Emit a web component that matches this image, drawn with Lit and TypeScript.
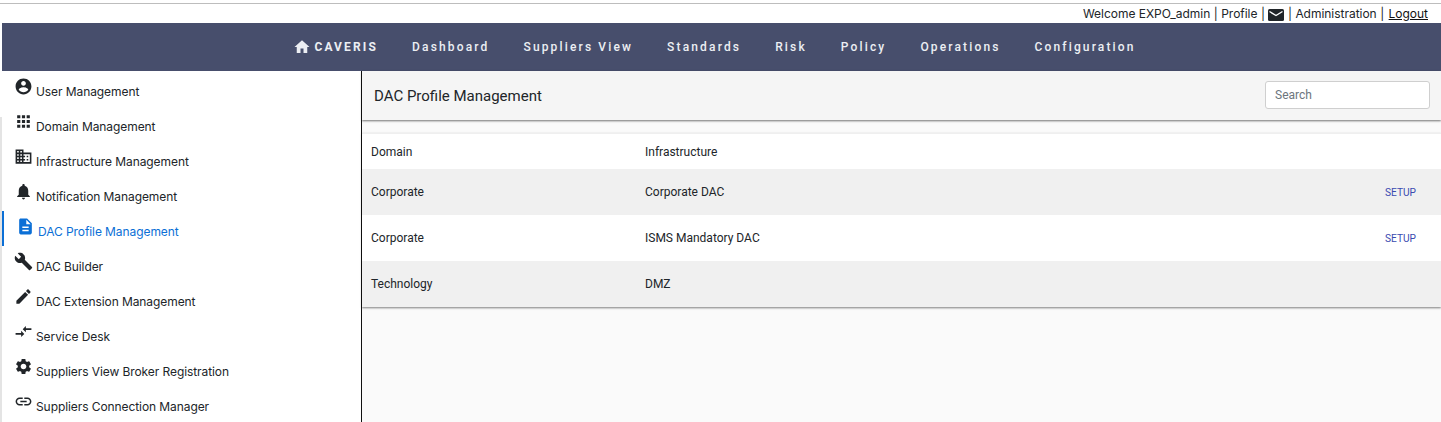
import { LitElement, html, css, svg } from "lit";
import { customElement } from "lit/decorators.js";

const ICONS: Record<string, string> = {
  user: "M12 2C6.48 2 2 6.48 2 12s4.48 10 10 10 10-4.48 10-10S17.52 2 12 2zm0 3c1.66 0 3 1.34 3 3s-1.34 3-3 3-3-1.34-3-3 1.34-3 3-3zm0 14.2c-2.5 0-4.71-1.28-6-3.22.03-1.99 4-3.08 6-3.08 1.99 0 5.97 1.09 6 3.08-1.29 1.94-3.5 3.22-6 3.22z",
  apps: "M4 8h4V4H4v4zm6 12h4v-4h-4v4zm-6 0h4v-4H4v4zm0-6h4v-4H4v4zm6 0h4v-4h-4v4zm6-10v4h4V4h-4zm-6 4h4V4h-4v4zm6 6h4v-4h-4v4zm0 6h4v-4h-4v4z",
  domain: "M12 7V3H2v18h20V7H12zM6 19H4v-2h2v2zm0-4H4v-2h2v2zm0-4H4V9h2v2zm0-4H4V5h2v2zm4 12H8v-2h2v2zm0-4H8v-2h2v2zm0-4H8V9h2v2zm0-4H8V5h2v2zm10 12h-8v-2h2v-2h-2v-2h2v-2h-2V9h8v10zm-2-8h-2v2h2v-2zm0 4h-2v2h2v-2z",
  bell: "M12 22c1.1 0 2-.9 2-2h-4c0 1.1.89 2 2 2zm6-6v-5c0-3.07-1.64-5.64-4.5-6.32V4c0-.83-.67-1.5-1.5-1.5s-1.5.67-1.5 1.5v.68C7.63 5.36 6 7.92 6 11v5l-2 2v1h16v-1l-2-2z",
  doc: "M14 2H6c-1.1 0-1.99.9-1.99 2L4 20c0 1.1.89 2 1.99 2H18c1.1 0 2-.9 2-2V8l-6-6zm2 16H8v-2h8v2zm0-4H8v-2h8v2zm-3-5V3.5L18.5 9H13z",
  wrench: "M22.7 19l-9.1-9.1c.9-2.3.4-5-1.5-6.9-2-2-5-2.4-7.4-1.3L9 6 6 9 1.6 4.7C.4 7.1.9 10.1 2.9 12.1c1.9 1.9 4.6 2.4 6.9 1.5l9.1 9.1c.4.4 1 .4 1.4 0l2.3-2.3c.5-.4.5-1.1.1-1.4z",
  pencil: "M3 17.25V21h3.75L17.81 9.94l-3.75-3.75L3 17.25zM20.71 7.04c.39-.39.39-1.02 0-1.41l-2.34-2.34c-.39-.39-1.02-.39-1.41 0l-1.83 1.83 3.75 3.75 1.83-1.83z",
  compare: "M9.01 14H2v2h7.01v3L13 15l-3.99-4v3zm5.98-1v-3H22V8h-7.01V5L11 9l3.99 4z",
  gear: "M19.14 12.94c.04-.3.06-.61.06-.94 0-.32-.02-.64-.07-.94l2.03-1.58c.18-.14.23-.41.12-.61l-1.92-3.32c-.12-.22-.37-.29-.59-.22l-2.39.96c-.5-.38-1.03-.7-1.62-.94l-.36-2.54c-.04-.24-.24-.41-.48-.41h-3.84c-.24 0-.43.17-.47.41l-.36 2.54c-.59.24-1.13.57-1.62.94l-2.39-.96c-.22-.08-.47 0-.59.22L2.74 8.87c-.12.21-.08.47.12.61l2.03 1.58c-.05.3-.09.63-.09.94s.02.64.07.94l-2.03 1.58c-.18.14-.23.41-.12.61l1.92 3.32c.12.22.37.29.59.22l2.39-.96c.5.38 1.03.7 1.62.94l.36 2.54c.05.24.24.41.48.41h3.84c.24 0 .44-.17.47-.41l.36-2.54c.59-.24 1.13-.56 1.62-.94l2.39.96c.22.08.47 0 .59-.22l1.92-3.32c.12-.22.07-.47-.12-.61l-2.01-1.58zM12 15.6c-1.98 0-3.6-1.62-3.6-3.6s1.62-3.6 3.6-3.6 3.6 1.62 3.6 3.6-1.62 3.6-3.6 3.6z",
  link: "M3.9 12c0-1.71 1.39-3.1 3.1-3.1h4V7H7c-2.76 0-5 2.24-5 5s2.24 5 5 5h4v-1.9H7c-1.71 0-3.1-1.39-3.1-3.1zM8 13h8v-2H8v2zm9-6h-4v1.9h4c1.71 0 3.1 1.39 3.1 3.1s-1.39 3.1-3.1 3.1h-4V17h4c2.76 0 5-2.24 5-5s-2.24-5-5-5z",
  home: "M10 20v-6h4v6h5v-8h3L12 3 2 12h3v8z",
};

const icon = (name: string, size: number) => html`<svg class="ic" width=${size} height=${size} viewBox="0 0 24 24" fill="currentColor">${svg`<path d=${ICONS[name]}></path>`}</svg>`;

const MENU: [string, string][] = [
  ["user", "User Management"],
  ["apps", "Domain Management"],
  ["domain", "Infrastructure Management"],
  ["bell", "Notification Management"],
  ["doc", "DAC Profile Management"],
  ["wrench", "DAC Builder"],
  ["pencil", "DAC Extension Management"],
  ["compare", "Service Desk"],
  ["gear", "Suppliers View Broker Registration"],
  ["link", "Suppliers Connection Manager"],
];

const NAV = ["Dashboard", "Suppliers View", "Standards", "Risk", "Policy", "Operations", "Configuration"];

const ROWS: [string, string, boolean][] = [
  ["Corporate", "Corporate DAC", true],
  ["Corporate", "ISMS Mandatory DAC", true],
  ["Technology", "DMZ", false],
];

@customElement("app-root")
export class AppRoot extends LitElement {
  static styles = css`
    :host { display: block; height: 422px; overflow: hidden; background: #fff; font-family: Inter, "Liberation Sans", sans-serif; color: #212529; }
    .top { border-top: 1px solid #bdbdbd; margin-top: 3px; height: 19px; display: flex; justify-content: flex-end; align-items: center; gap: 3.5px; padding-right: 13px; font-size: 12px; letter-spacing: -0.03px; color: #212529; white-space: nowrap; }
    .top u { color: #111; margin-left: 1px; }
    .mail { width: 16px; height: 12px; margin: 3px 0 0 0; display: block; }
    .nav { margin-left: 2px; height: 48px; background: #474e6c; display: flex; justify-content: center; align-items: center; gap: 34px; color: #eceef3; font-family: Roboto, sans-serif; font-weight: 500; font-size: 12px; letter-spacing: 2.15px; padding-right: 14px; }
    .brand { display: flex; align-items: center; gap: 3px; font-weight: 700; }
    .body { display: flex; height: 351px; }
    .rail { width: 2px; flex: none; display: flex; flex-direction: column; }
    .rail i { display: block; height: 46px; background: #fff; }
    .rail b { display: block; flex: 1; background: #e4e4e4; }
    .side { width: 360px; flex: none; box-sizing: border-box; border-right: 1px solid #111; display: flex; flex-direction: column; }
    .item { height: 35px; flex: none; display: flex; align-items: flex-start; gap: 3px; padding-left: 12px; font-size: 12px; letter-spacing: -0.08px; color: #212529; box-sizing: border-box; }
    .item .ic { margin-top: 6px; flex: none; color: #212529; }
    .item span { margin-top: 13px; line-height: 15px; white-space: nowrap; }
    .item.active { color: #0b6fd6; border-left: 2px solid #0b6fd6; padding-left: 12px; }
    .item.active .ic { color: #0b6fd6; }
    .main { flex: 1; min-width: 0; background: #fafafa; font-family: Roboto, sans-serif; }
    .head { height: 49px; background: #f5f5f5; display: flex; justify-content: space-between; align-items: center; padding: 0 11px 0 12px; box-shadow: 0 1px 2px rgba(0,0,0,.55); position: relative; font-size: 15px; color: #212529; }
    .search { box-sizing: border-box; width: 165px; height: 28px; margin-bottom: 1px; background: #fff; border: 1px solid #cfcfcf; border-radius: 3px; font: 12px Roboto, sans-serif; color: #495057; padding: 0 9px; outline: none; }
    .search::placeholder { color: #6c757d; opacity: 1; }
    .table { margin-top: 13px; background: #fff; box-shadow: 0 1px 2px rgba(0,0,0,.5); font-size: 12px; color: #212529; }
    .row { display: flex; align-items: center; height: 46px; padding: 0 25px 0 9px; }
    .row.hd { height: 36px; border-top: 1px solid #efefef; box-sizing: border-box; }
    .row:nth-child(even) { background: #f0f0f0; }
    .c1 { width: 274px; flex: none; }
    .c2 { flex: 1; }
    .setup { color: #3a4bb0; font-size: 10.2px; }
  `;

  render() {
    return html`
      <div class="top">
        <span>Welcome EXPO_admin</span><span>|</span><span>Profile</span><span>|</span>
        <svg class="mail" viewBox="0 0 16 12"><rect width="16" height="12" rx="1.5" fill="#212529"></rect><path d="M1.5 2.5L8 6.5l6.5-4" fill="none" stroke="#fff" stroke-width="1.4"></path></svg>
        <span>|</span><span>Administration</span><span>|</span><u>Logout</u>
      </div>
      <div class="nav">
        <span class="brand">${icon("home", 18)}CAVERIS</span>
        ${NAV.map((n) => html`<span>${n}</span>`)}
      </div>
      <div class="body">
        <div class="rail"><i></i><b></b></div>
        <div class="side">
          ${MENU.map(([i, t], idx) => html`<div class="item ${idx === 4 ? "active" : ""}">${icon(i, 19)}<span>${t}</span></div>`)}
        </div>
        <div class="main">
          <div class="head"><span>DAC Profile Management</span><input class="search" placeholder="Search" /></div>
          <div class="table">
            <div class="row hd"><div class="c1">Domain</div><div class="c2">Infrastructure</div></div>
            ${ROWS.map(([a, b, s]) => html`<div class="row"><div class="c1">${a}</div><div class="c2">${b}</div>${s ? html`<span class="setup">SETUP</span>` : ""}</div>`)}
          </div>
        </div>
      </div>
    `;
  }
}
